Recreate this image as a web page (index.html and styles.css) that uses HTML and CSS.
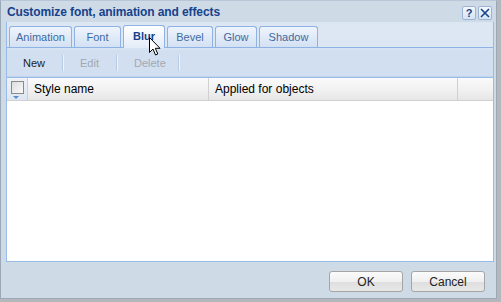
FILE: index.html
```html
<!DOCTYPE html>
<html lang="en">
<head>
    <meta charset="UTF-8">
    <title>Customize font, animation and effects</title>
    <link rel="stylesheet" href="styles.css">
</head>
<body>
    <div class="dialog">
        <div class="titlebar">
            <span class="title">Customize font, animation and effects</span>
            <div class="tools">
                <button class="tool">?</button>
                <button class="tool">
                    <svg width="10" height="10" viewBox="0 0 10 10"><path d="M1 1 L9 9 M9 1 L1 9" stroke="#15428b" stroke-width="1.6"/></svg>
                </button>
            </div>
        </div>

        <div class="panel">
            <div class="tabbar">
                <div class="tab tab-animation">Animation</div>
                <div class="tab tab-font">Font</div>
                <div class="tab tab-blur active">Blur</div>
                <div class="tab tab-bevel">Bevel</div>
                <div class="tab tab-glow">Glow</div>
                <div class="tab tab-shadow">Shadow</div>
                <!-- mouse pointer over the active tab -->
                <svg class="cursor" width="12" height="19" viewBox="0 0 12 19">
                    <path d="M0.5 0.5 L0.5 15.5 L4 12 L6.5 18 L8.8 17 L6.3 11.3 L11 11.3 Z" fill="#fff" stroke="#000" stroke-width="1"/>
                </svg>
            </div>

            <div class="toolbar">
                <span class="tb-btn">New</span>
                <span class="sep"></span>
                <span class="tb-btn disabled">Edit</span>
                <span class="sep"></span>
                <span class="tb-btn disabled last">Delete</span>
                <span class="sep"></span>
            </div>

            <div class="grid">
                <div class="grid-head">
                    <div class="col col-check">
                        <span class="checkbox"></span>
                        <span class="sort-arrow"></span>
                    </div>
                    <div class="col col-name">Style name</div>
                    <div class="col col-applied">Applied for objects</div>
                    <div class="col col-rest"></div>
                </div>
                <div class="grid-body"></div>
            </div>
        </div>

        <div class="footer">
            <button class="btn">OK</button>
            <button class="btn">Cancel</button>
        </div>
    </div>
</body>
</html>
```

FILE: styles.css
```css
body {
    margin: 0;
    background-color: #b4b8bd;
    font-family: 'Liberation Sans', Arial, sans-serif;
    font-size: 11px;
    color: #000;
}

.dialog {
    width: 497px;
    height: 299px;
    box-sizing: border-box;
    border: 1px solid #9aa8b8;
    border-top-color: #b8c7d8;
    background-color: #cfdae7;
    display: flex;
    flex-direction: column;
}

.titlebar {
    height: 21px;
    display: flex;
    align-items: center;
    justify-content: space-between;
    padding: 0 4px 0 6px;
}

.title {
    font-weight: bold;
    font-size: 12px;
    color: #15428b;
    letter-spacing: -0.1px;
}

.tools {
    display: flex;
    gap: 2px;
    margin-top: 2px;
}

.tool {
    width: 14px;
    height: 14px;
    padding: 0;
    border: 1px solid #9cb5d6;
    border-radius: 2px;
    background: linear-gradient(#f4f8fd, #d6e3f3);
    color: #15428b;
    font-family: 'Liberation Sans', Arial, sans-serif;
    font-weight: bold;
    font-size: 11px;
    line-height: 12px;
    display: flex;
    align-items: center;
    justify-content: center;
}

.panel {
    margin: 0 2px 0 5px;
    height: 239px;
    display: flex;
    flex-direction: column;
    border: 1px solid #99bbe8;
    border-top: none;
    background-color: #fff;
}

.tabbar {
    position: relative;
    height: 25px;
    display: flex;
    align-items: flex-end;
    gap: 2px;
    padding: 0 0 0 2px;
    background-color: #dde7f4;
    border-bottom: 1px solid #8db2e3;
}

.tab {
    box-sizing: border-box;
    height: 21px;
    line-height: 20px;
    text-align: center;
    border: 1px solid #8db2e3;
    border-bottom: none;
    border-radius: 3px 3px 0 0;
    background: linear-gradient(#eef4fc, #d3e1f3);
    color: #416aa3;
    font-size: 11px;
}

.tab-animation { width: 63px; }
.tab-font { width: 47px; }
.tab-blur { width: 42px; }
.tab-bevel { width: 46px; }
.tab-glow { width: 42px; }
.tab-shadow { width: 59px; }

.tab.active {
    height: 23px;
    line-height: 21px;
    background: linear-gradient(#ffffff, #e3ecf8);
    color: #15428b;
    font-weight: bold;
    margin-bottom: -1px;
}

.cursor {
    position: absolute;
    left: 142px;
    top: 15px;
}

.toolbar {
    height: 26px;
    display: flex;
    align-items: center;
    background-color: #d2dff0;
    border-top: 2px solid #d6e3f2;
    border-bottom: 1px solid #c2d4ec;
}

.tb-btn {
    padding: 0 17px 0 16px;
    color: #222;
    font-size: 11px;
}

.tb-btn.disabled {
    color: #a0a8b2;
}

.tb-btn.last {
    padding-right: 12px;
}

.sep {
    width: 1px;
    height: 16px;
    background-color: #eef4fb;
    border-left: 1px solid #b8cbe4;
}

.grid {
    flex: 1;
    display: flex;
    flex-direction: column;
    border-top: 1px solid #99bbe8;
}

.grid-head {
    height: 22px;
    display: flex;
    background: linear-gradient(#fafafa, #f0f0f0 60%, #e6e6e6);
    border-bottom: 1px solid #d0d0d0;
}

.col {
    display: flex;
    align-items: center;
    border-right: 1px solid #d0d0d0;
    font-size: 12px;
    color: #000;
}

.col-check {
    width: 20px;
    position: relative;
    justify-content: center;
    background: linear-gradient(#eef2f8, #dde6f2);
}

.checkbox {
    width: 11px;
    height: 11px;
    margin-top: -4px;
    border: 1px solid #8a8a8a;
    background: linear-gradient(135deg, #dcdcdc, #fafafa);
}

.sort-arrow {
    position: absolute;
    left: 6px;
    bottom: 1px;
    border-left: 3px solid transparent;
    border-right: 3px solid transparent;
    border-top: 3px solid #5a8ad0;
}

.col-name {
    width: 174px;
    padding-left: 6px;
}

.col-applied {
    width: 242px;
    padding-left: 6px;
}

.col-rest {
    flex: 1;
    border-right: none;
}

.grid-body {
    flex: 1;
    background-color: #fff;
}

.footer {
    flex: 1;
    display: flex;
    justify-content: flex-end;
    align-items: flex-start;
    gap: 8px;
    padding: 9px 11px 0 0;
}

.btn {
    width: 74px;
    height: 21px;
    border: 1px solid #a5a5a5;
    border-radius: 3px;
    background: linear-gradient(#fbfbfb, #f0f0f0 50%, #dedede 51%, #e8e8e8);
    font-family: 'Liberation Sans', Arial, sans-serif;
    font-size: 12px;
    color: #222;
    padding: 0;
}
```
